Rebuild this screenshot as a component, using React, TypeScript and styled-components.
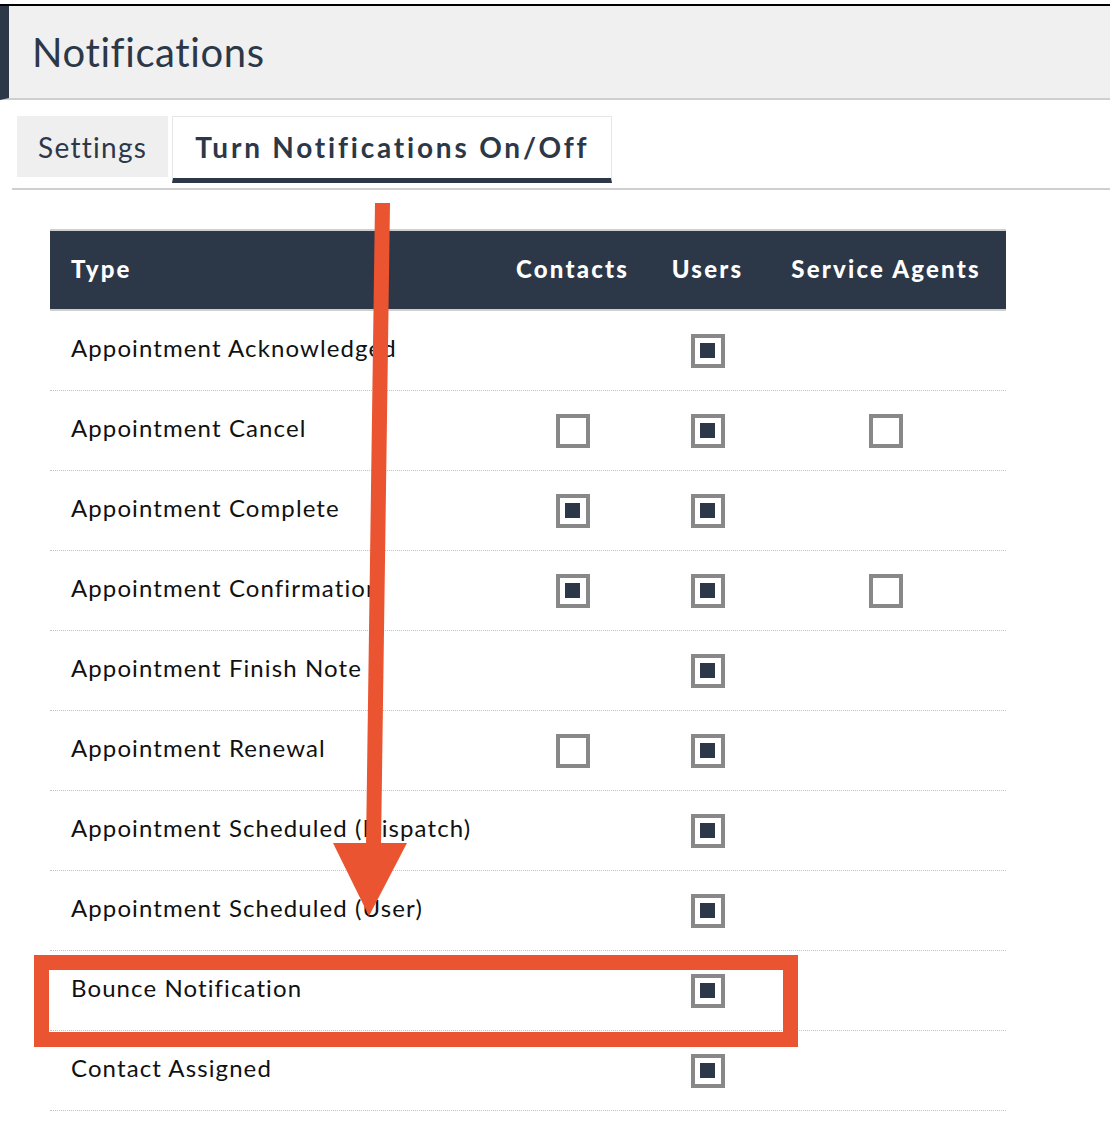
import React from 'react';
import styled, { createGlobalStyle } from 'styled-components';

const GlobalStyle = createGlobalStyle`
  html, body {
    margin: 0;
    padding: 0;
    background: #fff;
    font-family: Lato, "Open Sans", sans-serif;
  }
`;

const Page = styled.div`
  position: relative;
  width: 1110px;
  min-height: 1122px;
  padding-top: 4px;
  box-sizing: border-box;
  overflow: hidden;
`;

const TopRule = styled.div`
  height: 2px;
  background: #000;
`;

const Header = styled.div`
  height: 92px;
  display: flex;
  align-items: center;
  background: #f0f0f0;
  border-left: 9px solid #2c3848;
  border-bottom: 2px solid #cfcfcf;
  padding-left: 23px;
`;

const Title = styled.h1`
  margin: 0;
  font-size: 40px;
  font-weight: 400;
  color: #2c3848;
  letter-spacing: 0.6px;
`;

const TabBar = styled.div`
  margin: 16px 0 0 12px;
  padding: 0 0 5px 5px;
  display: flex;
  gap: 4px;
  border-bottom: 2px solid #cfcfcf;
`;

const Tab = styled.div<{ $active?: boolean }>`
  height: ${(p) => (p.$active ? 67 : 61)}px;
  box-sizing: border-box;
  display: flex;
  align-items: center;
  padding: 0 ${(p) => (p.$active ? 22 : 21)}px;
  padding-bottom: ${(p) => (p.$active ? 2 : 0)}px;
  font-size: 28px;
  font-weight: ${(p) => (p.$active ? 700 : 400)};
  letter-spacing: ${(p) => (p.$active ? '2.8px' : '1.3px')};
  color: #2c3848;
  background: ${(p) => (p.$active ? '#fff' : '#efefef')};
  border: ${(p) => (p.$active ? '1px solid #e6e6e6' : 'none')};
  border-bottom: ${(p) => (p.$active ? '5px solid #2c3848' : 'none')};
  align-self: flex-start;
`;

const Table = styled.div`
  margin: 39px 0 0 50px;
  width: 956px;
`;

const Row = styled.div<{ $head?: boolean }>`
  display: grid;
  grid-template-columns: 1fr 153px 117px 240px;
  align-items: center;
  height: ${(p) => (p.$head ? 78 : 79)}px;
  background: ${(p) => (p.$head ? '#2c3848' : '#fff')};
  border-top: ${(p) => (p.$head ? '2px solid #cfcfcf' : 'none')};
  border-bottom: ${(p) => (p.$head ? '2px solid #cfcfcf' : '1px dotted #c4c4c4')};
`;

const HeadCell = styled.div<{ $center?: boolean }>`
  color: #fff;
  font-size: 24px;
  font-weight: 900;
  letter-spacing: 2.2px;
  padding-left: ${(p) => (p.$center ? 0 : 21)}px;
  padding-bottom: 4px;
  text-align: ${(p) => (p.$center ? 'center' : 'left')};
  white-space: nowrap;
`;

const TypeCell = styled.div`
  font-size: 24px;
  color: #111;
  padding-left: 21px;
  padding-bottom: 6px;
  letter-spacing: 1.1px;
  white-space: nowrap;
`;

const BoxCell = styled.div`
  display: flex;
  justify-content: center;
`;

const Check = styled.span<{ $on?: boolean }>`
  width: 34px;
  height: 34px;
  box-sizing: border-box;
  border: 4px solid #888;
  background: #fff;
  display: flex;
  align-items: center;
  justify-content: center;

  &::after {
    content: '';
    width: 15px;
    height: 15px;
    background: ${(p) => (p.$on ? '#2c3848' : 'transparent')};
  }
`;

const Annotation = styled.svg`
  position: absolute;
  left: 0;
  top: 0;
  pointer-events: none;
`;

type Mark = boolean | null;

interface NotificationRow {
  type: string;
  contacts: Mark;
  users: Mark;
  agents: Mark;
}

const rows: NotificationRow[] = [
  { type: 'Appointment Acknowledged', contacts: null, users: true, agents: null },
  { type: 'Appointment Cancel', contacts: false, users: true, agents: false },
  { type: 'Appointment Complete', contacts: true, users: true, agents: null },
  { type: 'Appointment Confirmation', contacts: true, users: true, agents: false },
  { type: 'Appointment Finish Note', contacts: null, users: true, agents: null },
  { type: 'Appointment Renewal', contacts: false, users: true, agents: null },
  { type: 'Appointment Scheduled (Dispatch)', contacts: null, users: true, agents: null },
  { type: 'Appointment Scheduled (User)', contacts: null, users: true, agents: null },
  { type: 'Bounce Notification', contacts: null, users: true, agents: null },
  { type: 'Contact Assigned', contacts: null, users: true, agents: null },
];

const Box: React.FC<{ mark: Mark }> = ({ mark }) => (
  <BoxCell>{mark === null ? null : <Check $on={mark} />}</BoxCell>
);

const App: React.FC = () => {
  return (
    <Page>
      <GlobalStyle />
      <TopRule />
      <Header>
        <Title>Notifications</Title>
      </Header>
      <TabBar>
        <Tab>Settings</Tab>
        <Tab $active>Turn Notifications On/Off</Tab>
      </TabBar>
      <Table>
        <Row $head>
          <HeadCell>Type</HeadCell>
          <HeadCell $center>Contacts</HeadCell>
          <HeadCell $center>Users</HeadCell>
          <HeadCell $center>Service Agents</HeadCell>
        </Row>
        {rows.map((r) => (
          <Row key={r.type}>
            <TypeCell>{r.type}</TypeCell>
            <Box mark={r.contacts} />
            <Box mark={r.users} />
            <Box mark={r.agents} />
          </Row>
        ))}
      </Table>

      {/* red markup drawn over the screenshot */}
      <Annotation width="1110" height="1122" viewBox="0 0 1110 1122">
        <polygon points="375,203 390,203 381,846 366,846" fill="#ea5430" />
        <polygon points="333,843 407,843 369,916" fill="#ea5430" />
        <rect x="41.5" y="962.5" width="749" height="77" fill="none" stroke="#ea5430" strokeWidth="15" />
      </Annotation>
    </Page>
  );
};

export default App;
